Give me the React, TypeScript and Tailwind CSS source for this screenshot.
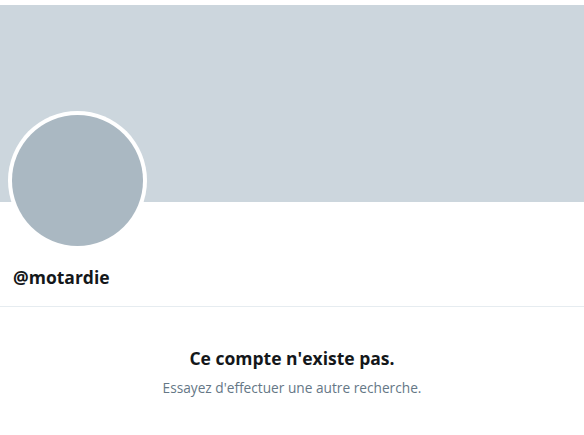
import React from "react";

export default function App() {
  return (
    <div className="w-[584px] h-[435px] bg-white overflow-hidden" style={{ fontFamily: '"Open Sans", "Noto Sans", sans-serif' }}>
      <div className="pt-[5px]">
        <div className="relative h-[197px] bg-[#ccd6dd]">
          <div className="absolute left-[8px] top-[106px] w-[139px] h-[139px] rounded-full bg-white p-[4px]">
            <div className="w-full h-full rounded-full bg-[#aab8c2]" />
          </div>
        </div>
      </div>
      <div className="h-[105px] flex flex-col justify-end border-b border-[#e6ecf0]">
        <div className="pl-[13px] pb-[18px] text-[17.5px] font-bold text-[#14171a] leading-[22px]">@motardie</div>
      </div>
      <div className="flex flex-col items-center pt-[39px]">
        <div className="text-[17.5px] font-bold text-[#14171a] leading-[24px]">Ce compte n'existe pas.</div>
        <div className="mt-[9px] text-[13.7px] text-[#657786] leading-[18px]">Essayez d'effectuer une autre recherche.</div>
      </div>
    </div>
  );
}
